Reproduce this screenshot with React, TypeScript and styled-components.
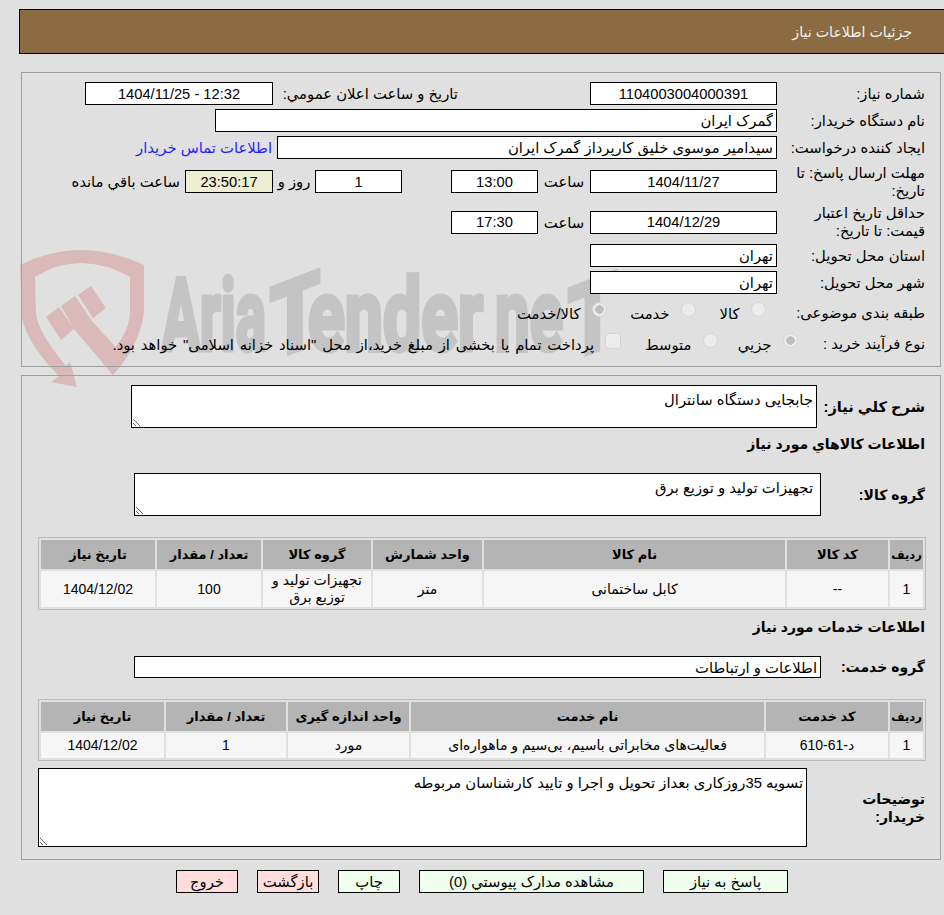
import React from 'react';
import styled, { createGlobalStyle } from 'styled-components';

const FONT = `'Liberation Sans', 'DejaVu Sans', sans-serif`;

const GlobalStyle = createGlobalStyle`
  html, body {
    margin: 0;
    background: #e0e0e0;
  }
  body {
    font-family: ${FONT};
    font-size: 14.8px;
    color: #000;
  }
`;

const Page = styled.div`
  position: relative;
  height: 915px;
  overflow: hidden;
  direction: rtl;
  background: #e0e0e0;
`;

const Watermark = styled.svg`
  position: absolute;
  top: 0;
  left: 0;
  pointer-events: none;
`;

const MarkText = styled.text`
  font-family: Roboto, sans-serif;
  font-weight: 700;
  font-size: 100px;
  fill: #c4c4c4;
  stroke: #c4c4c4;
  stroke-width: 5px;
  direction: ltr;
`;

const Content = styled.div`
  position: relative;
  z-index: 1;
  display: flex;
  flex-direction: column;
`;

const Header = styled.div`
  box-sizing: border-box;
  height: 45px;
  margin: 9px -4px 0 19px;
  padding-right: 35px;
  display: flex;
  align-items: center;
  background: #8b6c42;
  border: 1px solid #000;
  color: #f2f2f2;
  font-size: 14.2px;
`;

const Panel = styled.div<{ $top: number; $pad: string }>`
  box-sizing: border-box;
  width: 920px;
  margin: ${(p) => p.$top}px 3px 0 0;
  padding: ${(p) => p.$pad};
  border: 1px solid #a0a0a0;
  display: flex;
  flex-direction: column;
`;

const Row = styled.div<{ $h?: number; $gap?: number }>`
  display: flex;
  align-items: center;
  height: ${(p) => p.$h ?? 23}px;
  margin-top: ${(p) => p.$gap ?? 4}px;
  flex-shrink: 0;
`;

const Label = styled.div<{ $w?: number; $bold?: boolean }>`
  box-sizing: border-box;
  width: ${(p) => p.$w ?? 148}px;
  flex-shrink: 0;
  padding-left: 6px;
  line-height: 18px;
  font-size: ${(p) => (p.$bold ? 14 : 14.8)}px;
  font-weight: ${(p) => (p.$bold ? 700 : 400)};
`;

const WideLabel = styled(Label)`
  padding-left: 0;
  font-size: 14.6px;
  white-space: nowrap;
`;

const Field = styled.input<{ $w: number; $h?: number; $center?: boolean; $bg?: string }>`
  box-sizing: border-box;
  width: ${(p) => p.$w}px;
  height: ${(p) => p.$h ?? 23}px;
  flex-shrink: 0;
  margin: 0;
  padding: 0 3px;
  border: 1px solid #000;
  border-radius: 0;
  outline: none;
  background: ${(p) => p.$bg ?? '#fff'};
  color: #000;
  font: ${(p) => (p.$center ? 14.7 : 14.8)}px ${FONT};
  text-align: ${(p) => (p.$center ? 'center' : 'right')};
`;

const Note = styled.textarea<{ $w: number; $h: number; $pr?: number }>`
  box-sizing: border-box;
  width: ${(p) => p.$w}px;
  height: ${(p) => p.$h}px;
  flex-shrink: 0;
  margin: 0;
  padding: 5px ${(p) => p.$pr ?? 3}px 5px 3px;
  border: 1px solid #000;
  border-radius: 0;
  outline: none;
  background: #fff;
  color: #000;
  font: 14.8px/18px ${FONT};
  resize: both;
`;

const Inline = styled.span<{ $w?: number }>`
  flex-shrink: 0;
  white-space: nowrap;
  text-align: center;
  ${(p) => (p.$w ? `width: ${p.$w}px;` : 'margin: 0 5px;')}
`;

const Link = styled.a`
  flex-shrink: 0;
  margin-right: 5px;
  color: #1f1fff;
  white-space: nowrap;
`;

const Spacer = styled.div<{ $w: number }>`
  width: ${(p) => p.$w}px;
  flex-shrink: 0;
`;

const Option = styled.label<{ $w: number; $spread?: boolean }>`
  display: flex;
  align-items: center;
  gap: 11px;
  width: ${(p) => p.$w}px;
  flex-shrink: 0;
  white-space: nowrap;
  word-spacing: ${(p) => (p.$spread ? 1.7 : 0)}px;
`;

const Radio = styled.input.attrs({ type: 'radio', disabled: true })`
  appearance: none;
  box-sizing: border-box;
  width: 15px;
  height: 15px;
  margin: 0 0 7px;
  flex-shrink: 0;
  border: 1px solid #d4d4d4;
  border-radius: 50%;
  background: #ececec;
  &:checked {
    background: radial-gradient(circle, #bdbdbd 0 4px, #ececec 4.5px);
  }
`;

const Check = styled.input.attrs({ type: 'checkbox', disabled: true })`
  appearance: none;
  box-sizing: border-box;
  width: 16px;
  height: 16px;
  margin: 0 0 7px;
  flex-shrink: 0;
  border: 1px solid #d4d4d4;
  border-radius: 3px;
  background: #ececec;
`;

const Heading = styled.div<{ $h: number }>`
  height: ${(p) => p.$h}px;
  display: flex;
  align-items: center;
  font-size: 14px;
  font-weight: 700;
  flex-shrink: 0;
`;

const Table = styled.table<{ $top: number }>`
  box-sizing: border-box;
  width: 888px;
  margin: ${(p) => p.$top}px -1px 0 0;
  table-layout: fixed;
  border-collapse: separate;
  border-spacing: 2px;
  border: 1px solid #bcbcbc;
  flex-shrink: 0;
`;

const HeadCell = styled.th`
  height: 29px;
  padding: 0;
  background: #b4b4b4;
  font-size: 13px;
  font-weight: 700;
  &:first-child {
    font-size: 11.5px;
  }
`;

const Cell = styled.td<{ $h: number }>`
  height: ${(p) => p.$h}px;
  padding: 0;
  background: #f6f6f6;
  font-size: 14px;
  line-height: 17px;
  text-align: center;
`;

const Footer = styled.div`
  display: flex;
  gap: 19px;
  margin-top: 10px;
  padding-right: 156px;
`;

const ActionButton = styled.button<{ $w: number; $danger?: boolean }>`
  box-sizing: border-box;
  width: ${(p) => p.$w}px;
  height: 23px;
  padding: 0;
  border: 1px solid #000;
  border-radius: 0;
  background: ${(p) => (p.$danger ? '#ffdddd' : '#eeffee')};
  color: #000;
  font: 14.8px ${FONT};
`;

const goodsCols = [33, 101, 301, 109, 108, 104, 114];
const goodsHead = ['ردیف', 'کد کالا', 'نام کالا', 'واحد شمارش', 'گروه کالا', 'تعداد / مقدار', 'تاریخ نیاز'];
const goodsRow = ['1', '--', 'کابل ساختمانی', 'متر', 'تجهیزات تولید و توزیع برق', '100', '1404/12/02'];

const serviceCols = [33, 122, 353, 121, 120, 123];
const serviceHead = ['ردیف', 'کد خدمت', 'نام خدمت', 'واحد اندازه گیری', 'تعداد / مقدار', 'تاریخ نیاز'];
const serviceRow = ['1', 'د-61-610', 'فعالیت‌های مخابراتی باسیم، بی‌سیم و ماهواره‌ای', 'مورد', '1', '1404/12/02'];

const DataTable: React.FC<{ top: number; rowH: number; cols: number[]; head: string[]; row: string[] }> = ({
  top,
  rowH,
  cols,
  head,
  row,
}) => (
  <Table $top={top}>
    <colgroup>
      {cols.map((w, i) => (
        <col key={i} width={w} />
      ))}
    </colgroup>
    <thead>
      <tr>
        {head.map((h) => (
          <HeadCell key={h}>{h}</HeadCell>
        ))}
      </tr>
    </thead>
    <tbody>
      <tr>
        {row.map((c, i) => (
          <Cell key={i} $h={rowH}>
            {c}
          </Cell>
        ))}
      </tr>
    </tbody>
  </Table>
);

const Mark: React.FC = () => (
  <Watermark width={944} height={915} viewBox="0 0 944 915" aria-hidden="true">
    <g fill="#d9b9b9">
      <path d="M20 265 Q80 235 144 265 L144 312 Q140 345 113 375 L102 362 Q130 335 130 312 L130 277 Q80 249 35 277 L36 315 Q40 335 66 366 L70 362 L77 387 L51 382 L59 376 Q28 345 22 318 Z" />
      <path d="M61 306 L75 296 L92 321 L120 352 L113 375 L74 329 Z" />
      <path d="M46 317 L59 307 L74 329 L61 340 Z" />
      <path d="M78 295 L91 286 L106 308 L93 318 Z" />
    </g>
    <MarkText x={162} y={350} textLength={104} lengthAdjust="spacingAndGlyphs">
      Aria
    </MarkText>
    <MarkText
      x={270}
      y={350}
      textLength={50}
      lengthAdjust="spacingAndGlyphs"
      transform="translate(0 114) skewY(-21)"
    >
      T
    </MarkText>
    <MarkText x={308} y={350} textLength={175} lengthAdjust="spacingAndGlyphs">
      ender
    </MarkText>
    <MarkText x={495} y={350} textLength={68} lengthAdjust="spacingAndGlyphs">
      ne
    </MarkText>
    <MarkText
      x={568}
      y={350}
      textLength={49}
      lengthAdjust="spacingAndGlyphs"
      transform="translate(0 229) skewY(-21)"
    >
      T
    </MarkText>
  </Watermark>
);

const App: React.FC = () => {
  return (
    <Page>
      <GlobalStyle />
      <Mark />
      <Content>
        <Header>جزئیات اطلاعات نیاز</Header>

        <Panel $top={18} $pad="5px 15px 10px 0">
          <Row>
            <Label>شماره نیاز:</Label>
            <Field readOnly $w={187} $center value="1104003004000391" />
            <Spacer $w={132} />
            <Label $w={185}>تاریخ و ساعت اعلان عمومي:</Label>
            <Field readOnly $w={188} $center value="12:32 - 1404/11/25" />
          </Row>
          <Row>
            <Label>نام دستگاه خریدار:</Label>
            <Field readOnly $w={562} value="گمرک ایران" />
          </Row>
          <Row>
            <Label>ایجاد کننده درخواست:</Label>
            <Field readOnly $w={500} value="سیدامیر موسوی خلیق کارپرداز گمرک ایران" />
            <Link>اطلاعات تماس خریدار</Link>
          </Row>
          <Row $h={37}>
            <Label>مهلت ارسال پاسخ: تا تاریخ:</Label>
            <Field readOnly $w={187} $center value="1404/11/27" />
            <Inline $w={52}>ساعت</Inline>
            <Field readOnly $w={87} $center value="13:00" />
            <Spacer $w={49} />
            <Field readOnly $w={87} $center value="1" />
            <Inline $w={42}>روز و</Inline>
            <Field readOnly $w={88} $center $bg="#eeeed2" value="23:50:17" />
            <Inline>ساعت باقي مانده</Inline>
          </Row>
          <Row $h={36}>
            <Label>حداقل تاریخ اعتبار قیمت: تا تاریخ:</Label>
            <Field readOnly $w={187} $center value="1404/12/29" />
            <Inline $w={52}>ساعت</Inline>
            <Field readOnly $w={87} $center value="17:30" />
          </Row>
          <Row>
            <Label>استان محل تحویل:</Label>
            <Field readOnly $w={187} value="تهران" />
          </Row>
          <Row>
            <Label>شهر محل تحویل:</Label>
            <Field readOnly $w={187} value="تهران" />
          </Row>
          <Row $h={30}>
            <Label $w={159.5}>طبقه بندی موضوعی:</Label>
            <Option $w={70}>
              <Radio />
              کالا
            </Option>
            <Option $w={89}>
              <Radio />
              خدمت
            </Option>
            <Option $w={90}>
              <Radio defaultChecked />
              کالا/خدمت
            </Option>
          </Row>
          <Row $h={24}>
            <Label $w={127.5}>نوع فرآیند خرید :</Label>
            <Option $w={80}>
              <Radio defaultChecked />
              جزیي
            </Option>
            <Option $w={96.5}>
              <Radio />
              متوسط
            </Option>
            <Option $w={510} $spread>
              <Check />
              پرداخت تمام یا بخشی از مبلغ خرید،از محل "اسناد خزانه اسلامی" خواهد بود.
            </Option>
          </Row>
        </Panel>

        <Panel $top={8} $pad="9px 15px 12px 0">
          <Row $h={43} $gap={0}>
            <WideLabel $w={108} $bold>
              شرح كلي نياز:
            </WideLabel>
            <Note readOnly $w={686} $h={43} value="جابجایی دستگاه سانترال" />
          </Row>
          <Heading $h={32}>اطلاعات كالاهاي مورد نياز</Heading>
          <Row $h={43} $gap={13}>
            <Label $w={104} $bold>
              گروه کالا:
            </Label>
            <Note readOnly $w={687} $h={43} $pr={7} value="تجهیزات تولید و توزیع برق" />
          </Row>
          <DataTable top={21} rowH={36} cols={goodsCols} head={goodsHead} row={goodsRow} />
          <Heading $h={34}>اطلاعات خدمات مورد نیاز</Heading>
          <Row $h={22} $gap={12}>
            <Label $w={104} $bold>
              گروه خدمت:
            </Label>
            <Field readOnly $w={687} $h={22} value="اطلاعات و ارتباطات" />
          </Row>
          <DataTable top={21} rowH={25} cols={serviceCols} head={serviceHead} row={serviceRow} />
          <Row $h={79} $gap={7}>
            <Label $w={118} $bold>
              توضیحات خریدار:
            </Label>
            <Note
              readOnly
              $w={769}
              $h={79}
              value="تسویه 35روزکاری بعداز تحویل و اجرا و تایید کارشناسان مربوطه"
            />
          </Row>
        </Panel>

        <Footer>
          <ActionButton $w={125}>پاسخ به نیاز</ActionButton>
          <ActionButton $w={225}>مشاهده مدارک پیوستي (0)</ActionButton>
          <ActionButton $w={62}>چاپ</ActionButton>
          <ActionButton $w={62} $danger>
            بازگشت
          </ActionButton>
          <ActionButton $w={62} $danger>
            خروج
          </ActionButton>
        </Footer>
      </Content>
    </Page>
  );
};

export default App;
